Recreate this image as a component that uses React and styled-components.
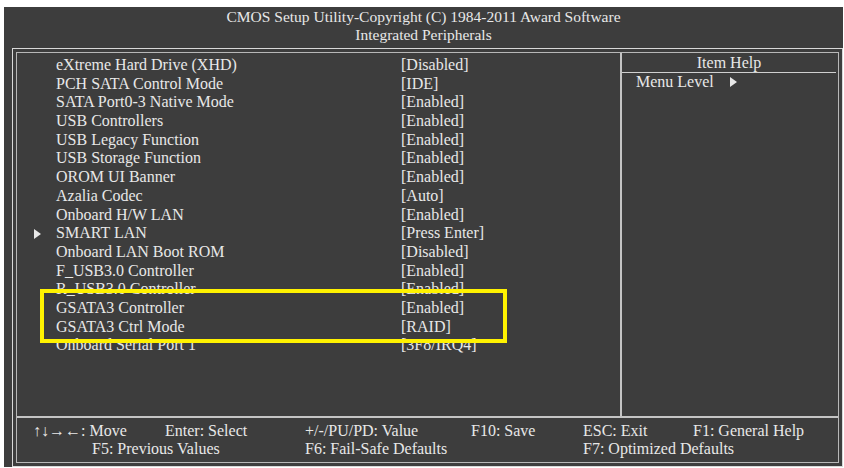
import React from 'react';
import styled, { createGlobalStyle } from 'styled-components';

const items = [
  { label: 'eXtreme Hard Drive (XHD)', value: '[Disabled]' },
  { label: 'PCH SATA Control Mode', value: '[IDE]' },
  { label: 'SATA Port0-3 Native Mode', value: '[Enabled]' },
  { label: 'USB Controllers', value: '[Enabled]' },
  { label: 'USB Legacy Function', value: '[Enabled]' },
  { label: 'USB Storage Function', value: '[Enabled]' },
  { label: 'OROM UI Banner', value: '[Enabled]' },
  { label: 'Azalia Codec', value: '[Auto]' },
  { label: 'Onboard H/W LAN', value: '[Enabled]' },
  { label: 'SMART LAN', value: '[Press Enter]', sub: true },
  { label: 'Onboard LAN Boot ROM', value: '[Disabled]' },
  { label: 'F_USB3.0 Controller', value: '[Enabled]' },
  { label: 'R_USB3.0 Controller', value: '[Enabled]' },
  { label: 'GSATA3 Controller', value: '[Enabled]' },
  { label: 'GSATA3 Ctrl Mode', value: '[RAID]' },
  { label: 'Onboard Serial Port 1', value: '[3F8/IRQ4]' },
];

const Arrow = ({ size = 10 }) => (
  <svg width={size * 0.7} height={size} viewBox="0 0 7 10">
    <path d="M0 0 L7 5 L0 10 Z" fill="#e8e8e8" />
  </svg>
);

const App = () => {
  return <>
    <GlobalStyle />
    <Screen>
      <Header>
        <div>CMOS Setup Utility-Copyright (C) 1984-2011 Award Software</div>
        <div>Integrated Peripherals</div>
      </Header>

      <Frame>
        <Inner>
          <Main>
            <List>
              {items.map((it) => (
                <Row key={it.label}>
                  <Marker>{it.sub && <Arrow />}</Marker>
                  <span>{it.label}</span>
                  <span>{it.value}</span>
                </Row>
              ))}
              <Highlight />
            </List>

            <Help>
              <HelpTitle>Item Help</HelpTitle>
              <HelpLine>
                Menu Level
                <Arrow />
              </HelpLine>
            </Help>
          </Main>

          <Footer>
            <Key>↑↓→←: Move</Key>
            <Key>Enter: Select</Key>
            <Key>+/-/PU/PD: Value</Key>
            <Key>F10: Save</Key>
            <Key>ESC: Exit</Key>
            <Key>F1: General Help</Key>
            <Key $span={2} $indent={59}>F5: Previous Values</Key>
            <Key>F6: Fail-Safe Defaults</Key>
            <Key $span={3} $start={5}>F7: Optimized Defaults</Key>
          </Footer>
        </Inner>
      </Frame>
    </Screen>
  </>;
};

export default App;

const GlobalStyle = createGlobalStyle`
  body {
    margin: 0;
    background: #ffffff;
  }
`;

const Screen = styled.div`
  display: flex;
  flex-direction: column;

  width: 839px;
  height: 460px;
  margin: 7px 0 0 4px;

  background: #3d3d3d;
  color: #e8e8e8;
  font-family: "Liberation Serif", "Times New Roman", serif;
  font-size: 16px;
`;

const Header = styled.div`
  display: flex;
  flex-direction: column;
  align-items: center;

  height: 41px;
  padding-top: 1px;
  box-sizing: border-box;

  font-size: 15.5px;
  line-height: 18px;
`;

const Frame = styled.div`
  width: 831px;
  height: 419px;
  margin-left: 8px;
  padding: 3px;
  box-sizing: border-box;

  border: 1px solid #d8d8d8;
`;

const Inner = styled.div`
  display: flex;
  flex-direction: column;

  height: 100%;
  box-sizing: border-box;

  border: 1px solid #b8b8b8;
`;

const Main = styled.div`
  display: flex;
  flex-direction: row;

  height: 363px;
  border-bottom: 2px solid #c4c4c4;
`;

const List = styled.div`
  position: relative;

  width: 603px;
  padding-top: 3px;

  border-right: 2px solid #c4c4c4;
`;

const Row = styled.div`
  display: grid;
  grid-template-columns: 39px 345px auto;
  align-items: center;

  height: 18.7px;
  line-height: 18.7px;
  white-space: nowrap;
`;

const Marker = styled.span`
  display: flex;
  justify-content: flex-end;
  padding-right: 15px;
`;

const Highlight = styled.div`
  position: absolute;
  left: 23px;
  top: 236px;

  width: 459px;
  height: 46px;

  border: 4px solid #fff200;
`;

const Help = styled.div`
  display: flex;
  flex-direction: column;
  flex: 1;
`;

const HelpTitle = styled.div`
  height: 19px;
  line-height: 20px;
  text-align: center;

  margin-right: 2px;
  border-bottom: 1px solid #d0d0d0;
`;

const HelpLine = styled.div`
  display: flex;
  align-items: center;
  gap: 16px;

  padding-left: 14px;
  line-height: 17px;
`;

const Footer = styled.div`
  display: grid;
  grid-template-columns: 132px 140px 166px 112px 110px 1fr;
  grid-auto-rows: 18px;

  padding: 4px 0 0 16px;
  white-space: nowrap;
`;

const Key = styled.span`
  grid-column: ${({ $start, $span }) => `${$start || 'auto'} / span ${$span || 1}`};
  padding-left: ${({ $indent }) => $indent || 0}px;
  line-height: 18px;
`;
